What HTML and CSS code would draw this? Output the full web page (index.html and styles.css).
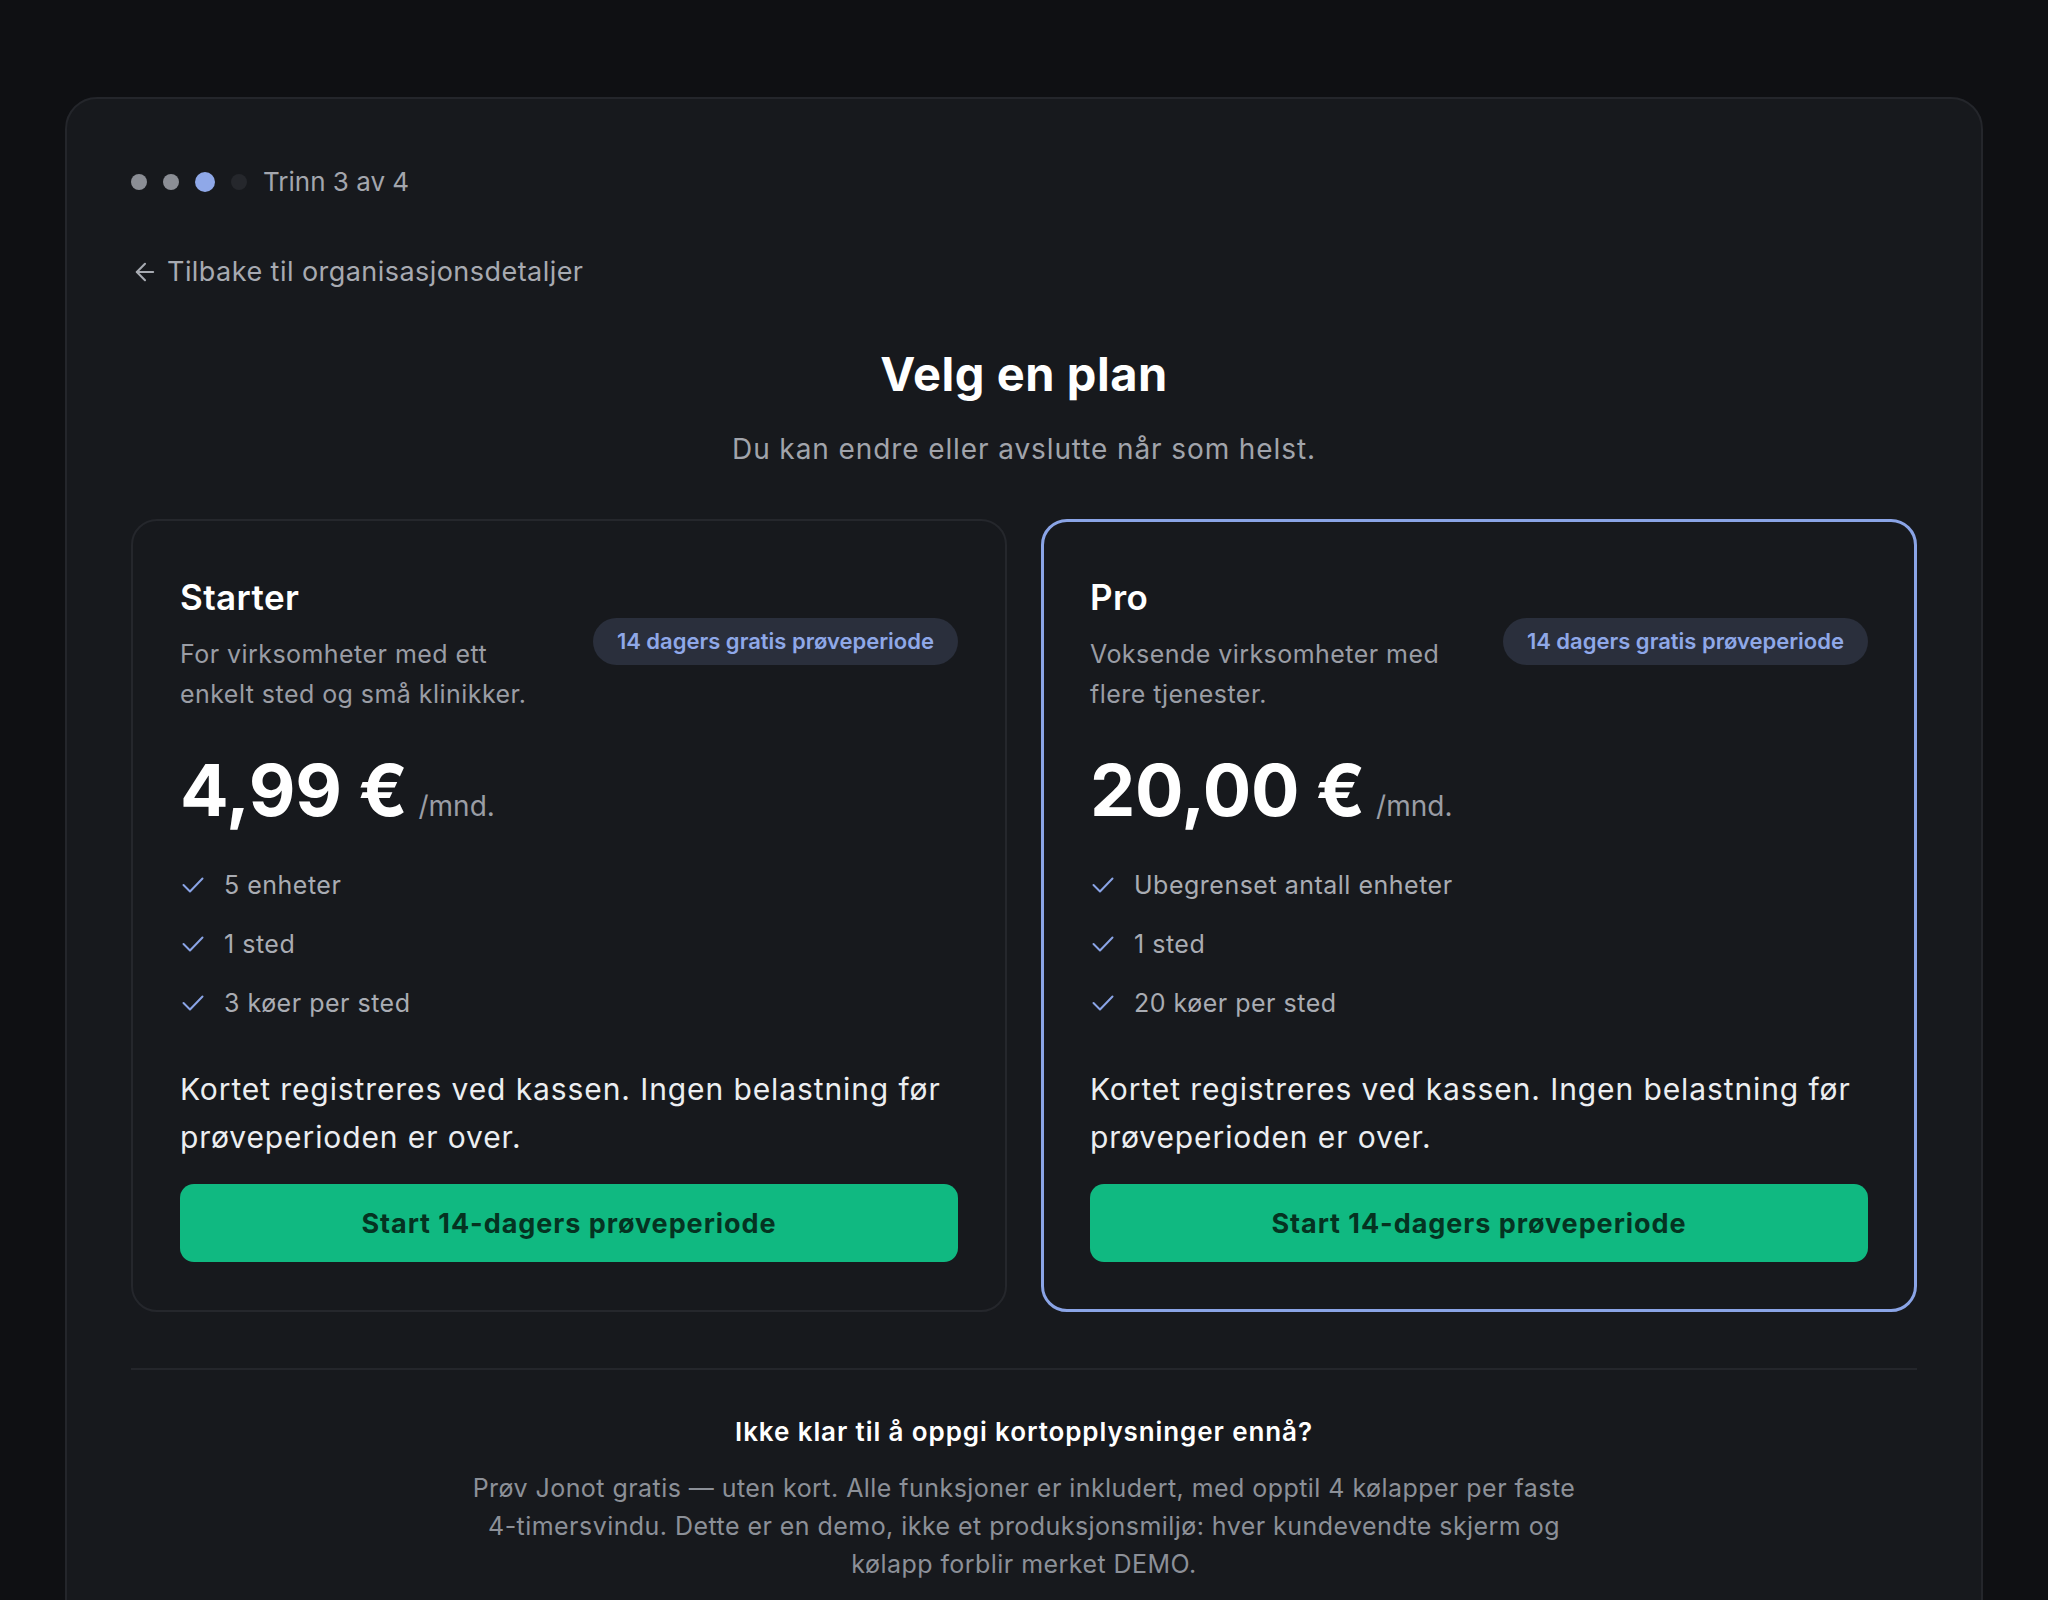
FILE: index.html
```html
<!DOCTYPE html>
<html lang="no">
<head>
<meta charset="utf-8">
<title>Velg en plan</title>
<link rel="stylesheet" href="styles.css">
</head>
<body>
<main class="shell">
  <div class="stepper">
    <span class="dot done"></span>
    <span class="dot done"></span>
    <span class="dot active"></span>
    <span class="dot todo"></span>
    <span class="step-label">Trinn 3 av 4</span>
  </div>

  <a class="back" href="#">
    <svg class="back-icon" viewBox="0 0 24 24" fill="none" stroke="currentColor" stroke-width="1.8" stroke-linecap="round" stroke-linejoin="round"><path d="M19 12H5"/><path d="M12 19l-7-7 7-7"/></svg>
    <span>Tilbake til organisasjonsdetaljer</span>
  </a>

  <header class="intro">
    <h1 class="title">Velg en plan</h1>
    <p class="subtitle">Du kan endre eller avslutte når som helst.</p>
  </header>

  <section class="plans">
    <article class="plan">
      <div class="plan-head">
        <div class="plan-info">
          <h2 class="plan-name">Starter</h2>
          <p class="plan-desc">For virksomheter med ett enkelt sted og små klinikker.</p>
        </div>
        <span class="badge">14 dagers gratis prøveperiode</span>
      </div>
      <div class="price-row">
        <span class="price">4,99 €</span>
        <span class="per">/mnd.</span>
      </div>
      <ul class="features">
        <li><svg class="check" viewBox="0 0 22 16" fill="none" stroke="currentColor" stroke-width="2" stroke-linecap="round" stroke-linejoin="round"><path d="M1.5 8 L8 14.5 L20.5 1.5"/></svg><span>5 enheter</span></li>
        <li><svg class="check" viewBox="0 0 22 16" fill="none" stroke="currentColor" stroke-width="2" stroke-linecap="round" stroke-linejoin="round"><path d="M1.5 8 L8 14.5 L20.5 1.5"/></svg><span>1 sted</span></li>
        <li><svg class="check" viewBox="0 0 22 16" fill="none" stroke="currentColor" stroke-width="2" stroke-linecap="round" stroke-linejoin="round"><path d="M1.5 8 L8 14.5 L20.5 1.5"/></svg><span>3 køer per sted</span></li>
      </ul>
      <p class="note">Kortet registreres ved kassen. Ingen belastning før prøveperioden er over.</p>
      <button class="cta" type="button">Start 14-dagers prøveperiode</button>
    </article>

    <article class="plan plan-featured">
      <div class="plan-head">
        <div class="plan-info">
          <h2 class="plan-name">Pro</h2>
          <p class="plan-desc">Voksende virksomheter med flere tjenester.</p>
        </div>
        <span class="badge">14 dagers gratis prøveperiode</span>
      </div>
      <div class="price-row">
        <span class="price">20,00 €</span>
        <span class="per">/mnd.</span>
      </div>
      <ul class="features">
        <li><svg class="check" viewBox="0 0 22 16" fill="none" stroke="currentColor" stroke-width="2" stroke-linecap="round" stroke-linejoin="round"><path d="M1.5 8 L8 14.5 L20.5 1.5"/></svg><span>Ubegrenset antall enheter</span></li>
        <li><svg class="check" viewBox="0 0 22 16" fill="none" stroke="currentColor" stroke-width="2" stroke-linecap="round" stroke-linejoin="round"><path d="M1.5 8 L8 14.5 L20.5 1.5"/></svg><span>1 sted</span></li>
        <li><svg class="check" viewBox="0 0 22 16" fill="none" stroke="currentColor" stroke-width="2" stroke-linecap="round" stroke-linejoin="round"><path d="M1.5 8 L8 14.5 L20.5 1.5"/></svg><span>20 køer per sted</span></li>
      </ul>
      <p class="note">Kortet registreres ved kassen. Ingen belastning før prøveperioden er over.</p>
      <button class="cta" type="button">Start 14-dagers prøveperiode</button>
    </article>
  </section>

  <hr class="divider">

  <section class="demo">
    <h3 class="demo-title">Ikke klar til å oppgi kortopplysninger ennå?</h3>
    <p class="demo-text">Prøv Jonot gratis — uten kort. Alle funksjoner er inkludert, med opptil 4 kølapper per faste 4-timersvindu. Dette er en demo, ikke et produksjonsmiljø: hver kundevendte skjerm og kølapp forblir merket DEMO.</p>
  </section>
</main>
</body>
</html>
```

FILE: styles.css
```css
* { box-sizing: border-box; }

html, body {
  margin: 0;
  background: #0f1013;
}

body {
  padding: 97px 65px 0;
  font-family: Inter, "Noto Sans", "Liberation Sans", sans-serif;
  color: #eceef1;
  min-height: 1600px;
}

.shell {
  background: #17191d;
  border: 2px solid #24262b;
  border-radius: 32px;
  padding: 67px 64px 80px;
}

/* stepper */
.stepper {
  display: flex;
  align-items: center;
  height: 32px;
  gap: 16px;
}
.dot {
  width: 16px;
  height: 16px;
  border-radius: 50%;
  flex: none;
}
.dot.done { background: #8b8e95; }
.dot.active { width: 20px; height: 20px; background: #8fa8e8; }
.dot.todo { background: #25272c; }
.step-label {
  font-size: 26px;
  line-height: 32px;
  color: #a3a6ad;
}

/* back link */
.back {
  display: inline-flex;
  align-items: center;
  gap: 8px;
  margin-top: 56px;
  height: 36px;
  color: #a7aab1;
  text-decoration: none;
  font-size: 27px;
  line-height: 36px;
  letter-spacing: 0.45px;
}
.back-icon {
  width: 28px;
  height: 28px;
  flex: none;
}

/* intro */
.intro {
  text-align: center;
  margin-top: 56px;
}
.title {
  margin: 0;
  font-size: 47px;
  line-height: 56px;
  font-weight: 700;
  color: #ffffff;
  letter-spacing: 0.55px;
}
.subtitle {
  margin: 27px 0 0;
  font-size: 28px;
  line-height: 40px;
  color: #a1a4ab;
  letter-spacing: 0.9px;
}

/* plans */
.plans {
  display: grid;
  grid-template-columns: 1fr 1fr;
  gap: 34px;
  margin-top: 50px;
}
.plan {
  display: flex;
  flex-direction: column;
  border: 2px solid #25272c;
  border-radius: 26px;
  padding: 47px 47px 48px;
  background: #17191d;
}
.plan-featured {
  border: 3px solid #8aa4e6;
  padding: 46px 46px 47px;
}

.plan-head {
  display: flex;
  align-items: center;
  justify-content: space-between;
  gap: 24px;
}
.plan-info {
  width: 372px;
  padding-top: 7px;
}
.plan-name {
  margin: 0;
  font-size: 35px;
  line-height: 44px;
  font-weight: 600;
  color: #ffffff;
  letter-spacing: 0.4px;
}
.plan-desc {
  margin: 15px 0 0;
  font-size: 25px;
  line-height: 40px;
  color: #9a9da5;
  letter-spacing: 0.45px;
}
.badge {
  flex: none;
  display: inline-flex;
  align-items: center;
  height: 47px;
  padding: 0 24px;
  border-radius: 24px;
  background: #2a2f3c;
  color: #8fa8e8;
  font-size: 22px;
  font-weight: 600;
  white-space: nowrap;
}

.price-row {
  display: flex;
  align-items: baseline;
  gap: 11px;
  margin-top: 40px;
}
.price {
  font-size: 72px;
  line-height: 72px;
  font-weight: 700;
  color: #ffffff;
  letter-spacing: -0.3px;
}
.per {
  font-size: 28px;
  color: #9a9da5;
}

.features {
  list-style: none;
  margin: 39px 0 0;
  padding: 0;
  display: flex;
  flex-direction: column;
  gap: 19px;
}
.features li {
  display: flex;
  align-items: center;
  gap: 20px;
  font-size: 25px;
  line-height: 40px;
  color: #a9acb3;
  letter-spacing: 0.5px;
}
.check {
  width: 22px;
  height: 16px;
  flex: none;
  color: #8aa4e6;
  margin-left: 2px;
}

.note {
  margin: 42px 0 0;
  font-size: 30px;
  line-height: 48px;
  color: #eceef1;
  letter-spacing: 0.9px;
}

.cta {
  margin-top: 23px;
  height: 78px;
  width: 100%;
  border: none;
  border-radius: 14px;
  background: #10b981;
  color: #053321;
  font-family: inherit;
  font-size: 27px;
  font-weight: 700;
  letter-spacing: 0.95px;
  cursor: pointer;
}

.divider {
  margin: 56px 0 0;
  border: none;
  height: 2px;
  background: #24262b;
}

.demo {
  text-align: center;
  margin-top: 44px;
}
.demo-title {
  margin: 0;
  font-size: 26px;
  line-height: 36px;
  font-weight: 600;
  color: #ffffff;
  letter-spacing: 0.9px;
}
.demo-text {
  max-width: 1120px;
  margin: 19px auto 0;
  font-size: 25px;
  line-height: 38px;
  color: #8c9098;
  letter-spacing: 0.45px;
}
```
